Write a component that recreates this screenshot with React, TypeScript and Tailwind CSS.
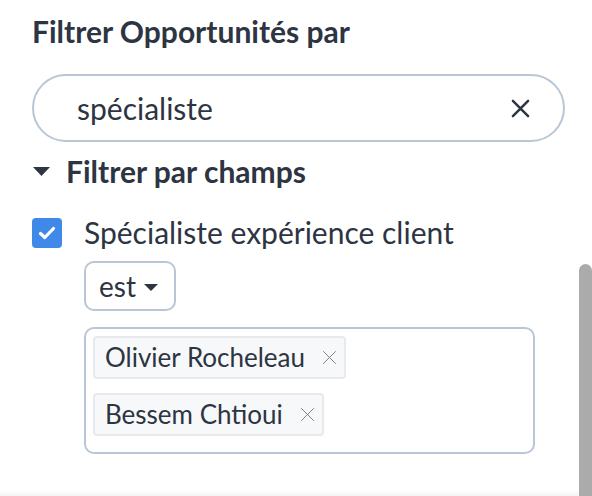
import React from "react";

const font = { fontFamily: "Lato, 'Noto Sans', sans-serif" };

function XIcon({ size, stroke, color }: { size: number; stroke: number; color: string }) {
  return (
    <svg width={size} height={size} viewBox="0 0 20 20" fill="none">
      <path d="M2 2L18 18M18 2L2 18" stroke={color} strokeWidth={stroke} strokeLinecap="round" />
    </svg>
  );
}

function Tag({ name }: { name: string }) {
  return (
    <div className="flex items-center self-start rounded-[4px] border-2 border-[#e7e9ec] bg-[#f7f8fa] pl-[10px] pr-[7px] py-[4px]">
      <span className="text-[26px] leading-[31px] text-[#2d3442]">{name}</span>
      <span className="ml-[17px] flex items-center">
        <XIcon size={15} stroke={1.3} color="#7a7f87" />
      </span>
    </div>
  );
}

export default function App() {
  return (
    <div className="relative h-[496px] w-[592px] overflow-hidden bg-white" style={font}>
      <div className="flex flex-col pl-[32px] pt-[13px] pr-[27px]">
        <h1 className="text-[30px] font-bold leading-[36px] text-[#2d3442]">Filtrer Opportunités par</h1>

        <div className="mt-[25px] flex h-[68px] items-center rounded-full border-2 border-[#b8c6d6] pl-[43px] pr-[33px]">
          <span className="flex-1 text-[30px] leading-[36px] text-[#2d3442]">spécialiste</span>
          <XIcon size={19} stroke={2.6} color="#2d3442" />
        </div>

        <div className="mt-[11px] flex items-center">
          <svg width="17" height="9" viewBox="0 0 17 9" className="mr-[16px] ml-[1px]">
            <path d="M0 0H17L8.5 9Z" fill="#2d3442" />
          </svg>
          <span className="text-[30px] font-bold leading-[36px] text-[#2d3442]">Filtrer par champs</span>
        </div>

        <div className="mt-[25px] flex items-start">
          <div className="mt-[4px] flex h-[30px] w-[30px] items-center justify-center rounded-[4px] bg-[#4189e8]">
            <svg width="18" height="14" viewBox="0 0 18 14" fill="none">
              <path d="M2.5 7.5L6.8 11.5L15.5 2.5" stroke="white" strokeWidth="3.2" strokeLinecap="round" strokeLinejoin="round" />
            </svg>
          </div>
          <div className="ml-[22px] flex flex-1 flex-col">
            <span className="text-[30px] leading-[36px] text-[#2d3442]">Spécialiste expérience client</span>

            <div className="mt-[11px] flex h-[50px] w-[92px] items-center rounded-[10px] border-2 border-[#b8c6d6] pl-[13px]">
              <span className="text-[28px] leading-[34px] text-[#2d3442]">est</span>
              <svg width="14" height="7" viewBox="0 0 14 7" className="ml-[8px] mt-[2px]">
                <path d="M0 0H14L7 7Z" fill="#2d3442" />
              </svg>
            </div>

            <div className="mt-[16px] flex w-[451px] flex-col gap-[14px] rounded-[10px] border-2 border-[#b8c6d6] pl-[7px] pt-[7px] pb-[16px]">
              <Tag name="Olivier Rocheleau" />
              <Tag name="Bessem Chtioui" />
            </div>
          </div>
        </div>
      </div>

      <div className="absolute right-0 top-[264px] h-[240px] w-[13px] rounded-t-[7px] bg-[#ababab]" />
      <div className="absolute bottom-0 left-0 h-[6px] w-[579px] bg-gradient-to-b from-white to-[#f4f4f4]" />
    </div>
  );
}
